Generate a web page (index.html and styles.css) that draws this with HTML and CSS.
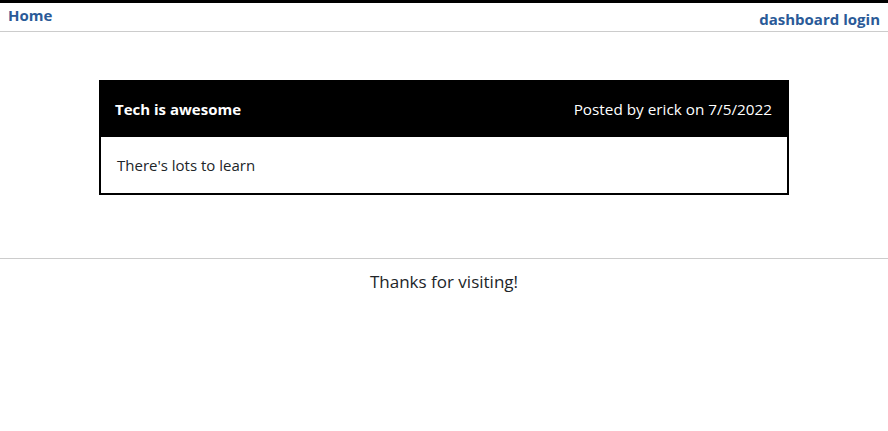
FILE: index.html
```html
<!DOCTYPE html>
<html>
<head>
<meta charset="utf-8">
<link rel="stylesheet" href="styles.css">
</head>
<body>
<header class="topbar">
  <a class="nav-link home" href="#">Home</a>
  <nav class="nav-right">
    <a class="nav-link" href="#">dashboard</a>
    <a class="nav-link" href="#">login</a>
  </nav>
</header>
<main class="content">
  <article class="post">
    <div class="post-head">
      <h2 class="post-title">Tech is awesome</h2>
      <span class="post-meta">Posted by erick on 7/5/2022</span>
    </div>
    <div class="post-body">There's lots to learn</div>
  </article>
</main>
<footer class="footer">Thanks for visiting!</footer>
</body>
</html>
```
FILE: styles.css
```css
html, body {
  margin: 0;
  padding: 0;
}
body {
  font-family: "Open Sans", "Noto Sans", sans-serif;
  color: #212529;
  background: #fff;
  border-top: 3px solid #000;
}
.topbar {
  display: flex;
  justify-content: space-between;
  align-items: flex-start;
  height: 28px;
  padding: 0 8px;
  border-bottom: 1px solid #cccccc;
}
.nav-link {
  color: #2a5a98;
  font-weight: 700;
  font-size: 15px;
  text-decoration: none;
  line-height: 20px;
}
.home {
  margin-top: 2px;
}
.nav-right {
  display: flex;
  gap: 4px;
  margin-top: 6px;
}
.content {
  padding: 48px 0 63px;
}
.post {
  width: 690px;
  margin: 0 auto;
}
.post-head {
  background: #000;
  color: #fff;
  height: 57px;
  display: flex;
  align-items: center;
  justify-content: space-between;
  padding: 0 17px 0 16px;
}
.post-title {
  margin: 0;
  font-size: 15px;
  font-weight: 700;
}
.post-meta {
  font-size: 15.3px;
}
.post-body {
  height: 56px;
  border: 2px solid #000;
  border-top: 0;
  padding: 0 16px;
  display: flex;
  align-items: center;
  font-size: 15px;
}
.footer {
  border-top: 1px solid #cccccc;
  text-align: center;
  font-size: 17px;
  padding-top: 11px;
}
```
